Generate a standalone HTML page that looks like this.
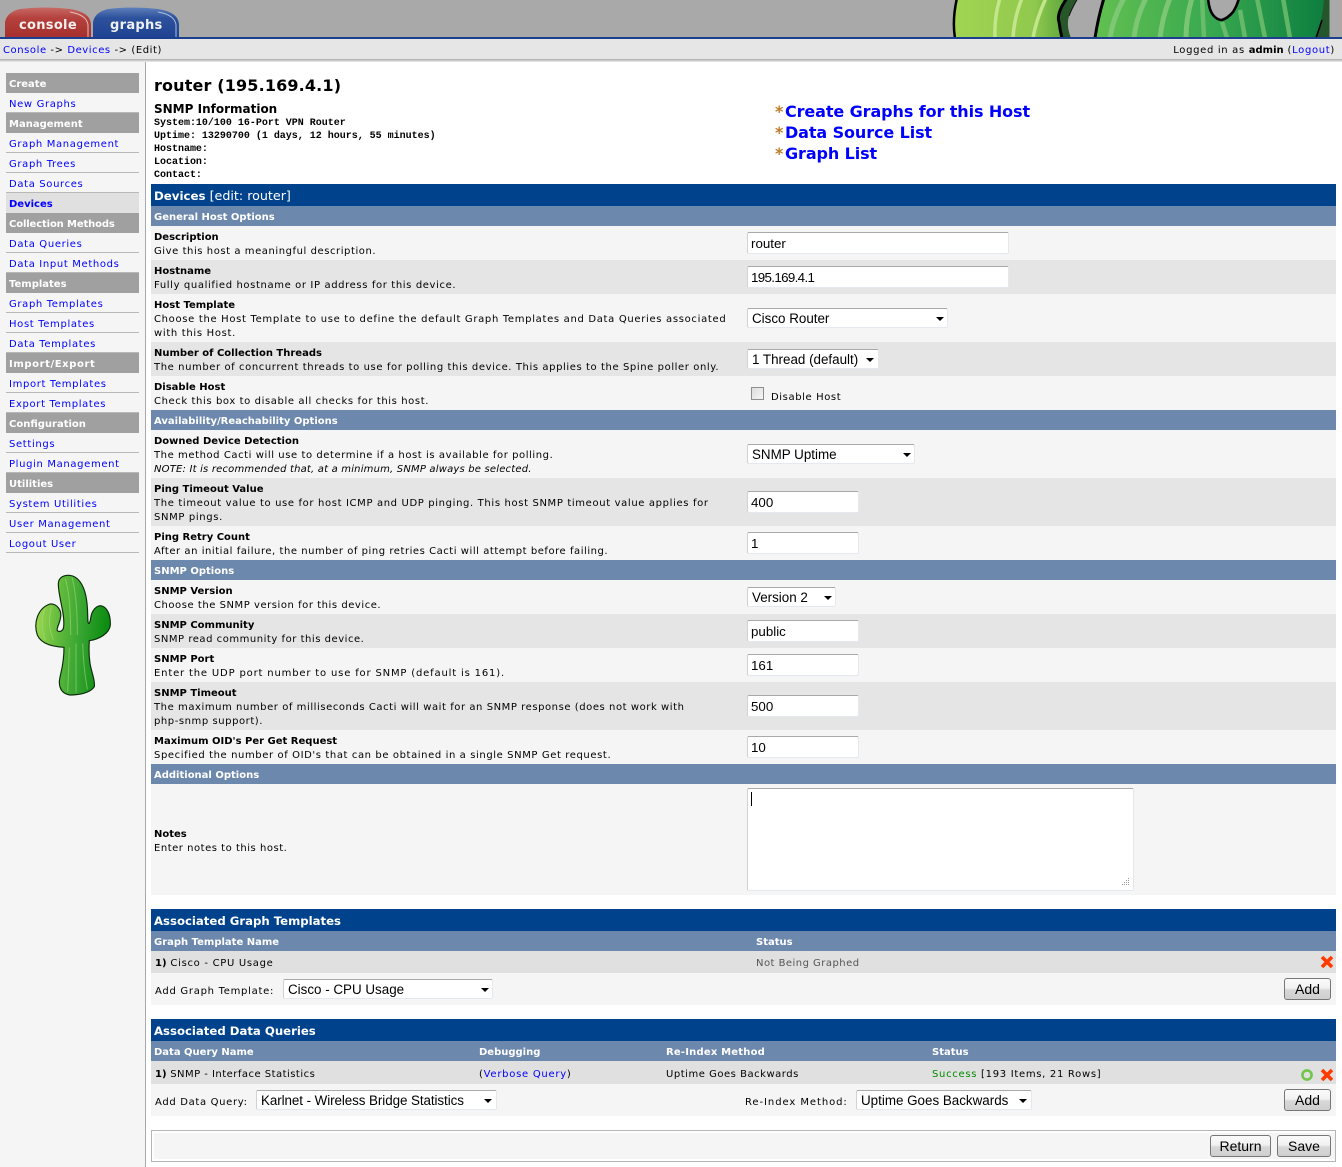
<!DOCTYPE html>
<html><head><meta charset="utf-8"><title>Console -> Devices -> (Edit)</title>
<style>
html,body{margin:0;padding:0;background:#fff;}
body{width:1342px;height:1167px;position:relative;overflow:hidden;font:10px/14px "DejaVu Sans",sans-serif;color:#000;letter-spacing:.6px;}
b{letter-spacing:0}
a{color:#00f;text-decoration:none;}
.a{position:absolute;white-space:nowrap;}
.r{position:absolute;left:151px;width:1185px;}
.f{background:#f5f5f5}.e{background:#e5e5e5}.d{background:#e0e0e0}
.s{background:#6d88ad;height:20px;color:#fff;font-weight:bold;line-height:24px;padding-left:3px;width:1182px;letter-spacing:0}
.b{background:#00438c;height:22px;color:#fff;line-height:24px;padding-left:3px;width:1182px;font-size:12.7px;letter-spacing:0}
.b b{font-size:11.8px}
.r div.t{position:absolute;left:3px;top:5px;width:620px;white-space:nowrap;}
.t b{display:block;height:14px;}
.h{position:absolute;left:6px;width:133px;height:20px;background:#a0a0a0;color:#fff;font-weight:bold;line-height:24px;letter-spacing:0}
.h span,.m span{margin-left:3px}
.m{position:absolute;left:6px;width:133px;height:19px;border-bottom:1px solid #b8b8b8;line-height:24px;letter-spacing:.65px}
input,select,textarea{position:absolute;box-sizing:border-box;background:#fff;border:1px solid #e4e9ef;border-top-color:#a9a9a9;border-left-color:#d0d3d6;border-radius:2px;margin:0;padding:0 3px;outline:0;font:13.33px "Liberation Sans",sans-serif;color:#000;letter-spacing:0;}
select{appearance:none;-webkit-appearance:none;padding:0 0 0 4px;letter-spacing:0;font-size:13.4px;}
.ar{position:absolute;width:0;height:0;border:4px solid transparent;border-top:4px solid #000;border-bottom:0;}
.btn{position:absolute;box-sizing:border-box;height:22px;border:1px solid #777;border-radius:3px;background:linear-gradient(#fbfbfb 0,#f1f1f1 45%,#d8d8d8 55%,#cfcfcf 100%);text-align:center;font:14px/20px "Liberation Sans",sans-serif;color:#000;letter-spacing:0}
.mono{font:bold 10px/13px "Liberation Mono",monospace;letter-spacing:-.01px}
.st{position:absolute;line-height:23px;color:#fff;font-weight:bold;letter-spacing:0;white-space:nowrap}
.lk i{display:inline-block;width:10px;font-style:normal}
</style></head><body>

<!-- top banner -->
<div class="a" style="left:0;top:0;width:1342px;height:37px;background:#a9a9a9;overflow:hidden">
<svg width="402" height="37" viewBox="940 0 402 37" style="position:absolute;left:940px;top:0">
<defs>
<linearGradient id="g1" x1="0" x2="1" y1="0" y2="0"><stop offset="0" stop-color="#a2d452"/><stop offset=".7" stop-color="#90c94e"/><stop offset="1" stop-color="#5aa53c"/></linearGradient>
<linearGradient id="g2" x1="0" x2="1" y1="0" y2="0"><stop offset="0" stop-color="#62c050"/><stop offset=".5" stop-color="#38a850"/><stop offset="1" stop-color="#0b7c3e"/></linearGradient>
</defs>
<path d="M957 -2Q952 20 955 38L1064 38Q1054 18 1068 -2Z" fill="url(#g1)"/>
<path d="M1000 -2Q994 18 995 38M1022 -2Q1014 18 1013 38M1046 -2Q1036 20 1033 38" stroke="#c3e58c" stroke-width="3.5" fill="none"/>
<path d="M957 -2Q952 20 955 38" stroke="#000" stroke-width="2.5" fill="none"/>
<path d="M1067 -2Q1056 14 1060 22Q1061 30 1063 38L1071 38Q1066 26 1069 16Q1072 8 1078 -2Z" fill="#26562a"/>
<path d="M1067 -2Q1056 14 1059 22Q1060 30 1062 38" stroke="#000" stroke-width="3" fill="none"/>
<path d="M1078 -2Q1072 8 1069 16" stroke="#111" stroke-width="1" fill="none"/>
<path d="M1104 -2Q1098 18 1095 38L1329.5 38L1329.5 -2Z" fill="url(#g2)"/>
<path d="M1124 -2Q1113 18 1110 38M1146 -2Q1136 18 1134 38M1170 -2Q1162 18 1160 38M1192 -2Q1186 18 1186 38" stroke="#85c97a" stroke-width="5" fill="none" opacity=".85"/>
<path d="M1202 -2L1204 38M1222 22L1227 38M1240 10L1245 38M1257 -2L1265 38M1283 -2L1290 38" stroke="#74c070" stroke-width="4.5" fill="none" opacity=".8"/>
<path d="M1324 -2Q1323 18 1316 38L1329.5 38L1329.5 -2Z" fill="#25562b"/>
<path d="M1322 20L1316 38" stroke="#000" stroke-width="1.6" fill="none"/>
<path d="M1104 -2Q1098 18 1095 38" stroke="#000" stroke-width="3" fill="none"/>
<path d="M1208 -2Q1209 10 1213 15Q1217 20 1222 20Q1228 18 1233 12Q1237 6 1239 -2Z" fill="#a9a9a9" stroke="#000" stroke-width="2.6"/>
</svg>
<svg width="190" height="37" style="position:absolute;left:0;top:0">
<defs>
<linearGradient id="rd" x1="0" x2="0" y1="0" y2="1"><stop offset="0" stop-color="#c86a66"/><stop offset=".35" stop-color="#b5423e"/><stop offset="1" stop-color="#a5302d"/></linearGradient>
<linearGradient id="bl" x1="0" x2="0" y1="0" y2="1"><stop offset="0" stop-color="#5f80bb"/><stop offset=".35" stop-color="#2d519c"/><stop offset="1" stop-color="#1f4392"/></linearGradient>
</defs>
<path d="M5 37V22Q7 12 20 9Q45 6 70 9Q90 12 91 24V37Z" fill="url(#rd)"/>
<path d="M88 37V25Q87 15 70 12" stroke="#e6bdbb" stroke-width="1" fill="none"/>
<path d="M93 37V22Q95 12 108 9Q133 6 158 9Q178 12 179 24V37Z" fill="url(#bl)"/>
<path d="M176 37V25Q175 15 158 12" stroke="#a9bbdb" stroke-width="1" fill="none"/>
</svg>
<div class="a" style="left:19px;top:17px;color:#f4f0ee;font:bold 13px/18px 'DejaVu Sans',sans-serif;letter-spacing:.3px">console</div>
<div class="a" style="left:110px;top:17px;color:#eef1f6;font:bold 13px/18px 'DejaVu Sans',sans-serif;letter-spacing:.3px">graphs</div>
</div>
<div class="a" style="left:0;top:37px;width:1342px;height:2px;background:#1b3f8e"></div>
<div class="a" style="left:0;top:39px;width:1342px;height:20px;background:#e6e6e6"></div>
<div class="a" style="left:0;top:59px;width:1342px;height:3px;background:linear-gradient(#a8a8a8,#efefef)"></div>
<div class="a" style="left:3px;top:44px;letter-spacing:.57px"><a>Console</a> -&gt; <a>Devices</a> -&gt; (Edit)</div>
<div class="a" style="right:7px;top:44px;letter-spacing:.68px">Logged in as <b>admin</b> (<a>Logout</a>)</div>

<!-- sidebar -->
<div class="a" style="left:0;top:62px;width:145px;height:1105px;background:#f5f5f5;border-right:1px solid #a9a9a9"></div>
<div class="h" style="top:73px"><span>Create</span></div>
<div class="m" style="top:93px"><span><a>New Graphs</a></span></div>
<div class="h" style="top:113px"><span>Management</span></div>
<div class="m" style="top:133px"><span><a>Graph Management</a></span></div>
<div class="m" style="top:153px"><span><a>Graph Trees</a></span></div>
<div class="m" style="top:173px"><span><a>Data Sources</a></span></div>
<div class="m" style="top:193px;background:#e0e0e0;border-bottom:0;height:20px"><span><a><b>Devices</b></a></span></div>
<div class="h" style="top:213px;letter-spacing:-.13px"><span>Collection Methods</span></div>
<div class="m" style="top:233px"><span><a>Data Queries</a></span></div>
<div class="m" style="top:253px"><span><a>Data Input Methods</a></span></div>
<div class="h" style="top:273px"><span>Templates</span></div>
<div class="m" style="top:293px"><span><a>Graph Templates</a></span></div>
<div class="m" style="top:313px"><span><a>Host Templates</a></span></div>
<div class="m" style="top:333px"><span><a>Data Templates</a></span></div>
<div class="h" style="top:353px;letter-spacing:.6px"><span>Import/Export</span></div>
<div class="m" style="top:373px"><span><a>Import Templates</a></span></div>
<div class="m" style="top:393px"><span><a>Export Templates</a></span></div>
<div class="h" style="top:413px"><span>Configuration</span></div>
<div class="m" style="top:433px"><span><a>Settings</a></span></div>
<div class="m" style="top:453px"><span><a>Plugin Management</a></span></div>
<div class="h" style="top:473px"><span>Utilities</span></div>
<div class="m" style="top:493px"><span><a>System Utilities</a></span></div>
<div class="m" style="top:513px"><span><a>User Management</a></span></div>
<div class="m" style="top:533px"><span><a>Logout User</a></span></div>

<svg class="a" style="left:0;top:560px" width="150" height="150" viewBox="0 0 450 450">
<defs><linearGradient id="cg" x1="0" x2="1" y1="0" y2=".15"><stop offset="0" stop-color="#a8dc55"/><stop offset=".35" stop-color="#62bb3c"/><stop offset=".65" stop-color="#38a532"/><stop offset="1" stop-color="#0c8c10"/></linearGradient></defs>
<path d="M175 72C175 50 195 45 208 46C235 48 250 75 257 105C265 140 262 170 264 185C265 195 270 190 272 175C275 150 290 137 302 137C322 140 332 165 331 195C328 222 295 238 268 242C266 270 267 290 270 310C275 340 286 360 283 380C270 400 235 405 210 405C190 402 178 390 178 365C180 340 192 320 192 262C165 260 125 255 112 225C100 190 112 145 150 132C170 130 185 150 182 170C180 190 168 205 172 212C180 218 190 212 191 200C195 160 175 110 175 72Z" fill="url(#cg)" stroke="#0b2c0b" stroke-width="3.5"/>
<path d="M196 56Q212 110 212 225M216 52Q232 110 232 225M208 262Q206 330 203 395M228 250V398M248 250Q250 320 262 388M135 145Q118 185 135 240M155 140Q140 190 160 240" stroke="#a8dd80" stroke-width="3" fill="none" opacity=".55"/>
</svg>

<!-- header -->
<div class="a" style="left:154px;top:76px;font:bold 16px/20px 'DejaVu Sans',sans-serif;letter-spacing:.15px">router (195.169.4.1)</div>
<div class="a" style="left:154px;top:101px;font:bold 12px/16px 'DejaVu Sans',sans-serif;letter-spacing:0">SNMP Information</div>
<div class="a mono" style="left:154px;top:117px">System:10/100 16-Port VPN Router</div>
<div class="a mono" style="left:154px;top:130px">Uptime: 13290700 (1 days, 12 hours, 55 minutes)</div>
<div class="a mono" style="left:154px;top:143px">Hostname:</div>
<div class="a mono" style="left:154px;top:156px">Location:</div>
<div class="a mono" style="left:154px;top:169px">Contact:</div>
<div class="a lk" style="left:775px;top:101px;font:bold 16px/21px 'DejaVu Sans',sans-serif;color:#c07c28;letter-spacing:-.1px"><i>*</i><a>Create Graphs for this Host</a><br><i>*</i><a>Data Source List</a><br><i>*</i><a>Graph List</a></div>

<!-- device form -->
<div class="r b" style="top:184px"><b>Devices</b> [edit: router]</div>
<div class="r s" style="top:206px">General Host Options</div>
<div class="r f" style="top:226px;height:34px"><div class="t" style="letter-spacing:.56px"><b>Description</b>Give this host a meaningful description.</div></div>
<div class="r e" style="top:260px;height:34px"><div class="t" style="letter-spacing:.62px"><b>Hostname</b>Fully qualified hostname or IP address for this device.</div></div>
<div class="r f" style="top:294px;height:48px"><div class="t" style="letter-spacing:.68px"><b>Host Template</b>Choose the Host Template to use to define the default Graph Templates and Data Queries associated<br>with this Host.</div></div>
<div class="r e" style="top:342px;height:34px"><div class="t" style="letter-spacing:.59px"><b>Number of Collection Threads</b>The number of concurrent threads to use for polling this device. This applies to the Spine poller only.</div></div>
<div class="r f" style="top:376px;height:34px"><div class="t"><b>Disable Host</b>Check this box to disable all checks for this host.</div></div>
<div class="r s" style="top:410px">Availability/Reachability Options</div>
<div class="r f" style="top:430px;height:48px"><div class="t" style="letter-spacing:.57px"><b>Downed Device Detection</b>The method Cacti will use to determine if a host is available for polling.<br><i style="letter-spacing:.19px">NOTE: It is recommended that, at a minimum, SNMP always be selected.</i></div></div>
<div class="r e" style="top:478px;height:48px"><div class="t" style="letter-spacing:.64px"><b>Ping Timeout Value</b>The timeout value to use for host ICMP and UDP pinging. This host SNMP timeout value applies for<br>SNMP pings.</div></div>
<div class="r f" style="top:526px;height:34px"><div class="t" style="letter-spacing:.54px"><b>Ping Retry Count</b>After an initial failure, the number of ping retries Cacti will attempt before failing.</div></div>
<div class="r s" style="top:560px">SNMP Options</div>
<div class="r f" style="top:580px;height:34px"><div class="t" style="letter-spacing:.54px"><b>SNMP Version</b>Choose the SNMP version for this device.</div></div>
<div class="r e" style="top:614px;height:34px"><div class="t" style="letter-spacing:.53px"><b>SNMP Community</b>SNMP read community for this device.</div></div>
<div class="r f" style="top:648px;height:34px"><div class="t" style="letter-spacing:.83px"><b>SNMP Port</b>Enter the UDP port number to use for SNMP (default is 161).</div></div>
<div class="r e" style="top:682px;height:48px"><div class="t" style="letter-spacing:.56px"><b>SNMP Timeout</b>The maximum number of milliseconds Cacti will wait for an SNMP response (does not work with<br>php-snmp support).</div></div>
<div class="r f" style="top:730px;height:34px"><div class="t"><b>Maximum OID's Per Get Request</b>Specified the number of OID's that can be obtained in a single SNMP Get request.</div></div>
<div class="r s" style="top:764px">Additional Options</div>
<div class="r f" style="top:784px;height:111px"><div class="t" style="top:44px;letter-spacing:.52px"><b>Notes</b>Enter notes to this host.</div></div>

<input style="left:747px;top:232px;width:262px;height:22px" value="router">
<input style="left:747px;top:266px;width:262px;height:22px;letter-spacing:-.65px" value="195.169.4.1">
<select style="left:747px;top:308px;width:201px;height:20px"><option>Cisco Router</option></select><i class="ar" style="left:936px;top:317px"></i>
<select style="left:747px;top:349px;width:132px;height:20px"><option>1 Thread (default)</option></select><i class="ar" style="left:866px;top:358px"></i>
<input type="checkbox" style="left:751px;top:387px;width:13px;height:13px;appearance:none;-webkit-appearance:none;padding:0;border:1px solid #8e8e8e;border-radius:0;background:linear-gradient(135deg,#ddd,#f6f6f6)">
<div class="a" style="left:771px;top:391px">Disable Host</div>
<select style="left:747px;top:444px;width:168px;height:20px"><option>SNMP Uptime</option></select><i class="ar" style="left:903px;top:453px"></i>
<input style="left:747px;top:491px;width:112px;height:22px" value="400">
<input style="left:747px;top:532px;width:112px;height:22px" value="1">
<select style="left:747px;top:587px;width:89px;height:20px"><option>Version 2</option></select><i class="ar" style="left:824px;top:596px"></i>
<input style="left:747px;top:620px;width:112px;height:22px" value="public">
<input style="left:747px;top:654px;width:112px;height:22px" value="161">
<input style="left:747px;top:695px;width:112px;height:22px" value="500">
<input style="left:747px;top:736px;width:112px;height:22px" value="10">
<textarea style="left:747px;top:788px;width:387px;height:103px;resize:none"></textarea>
<div class="a" style="left:751px;top:792px;width:1px;height:14px;background:#000"></div>
<svg class="a" style="left:1120px;top:877px" width="10" height="10"><path d="M8 1h1v1H8zM6 3h1v1H6zM8 3h1v1H8zM4 5h1v1H4zM6 5h1v1H6zM8 5h1v1H8zM2 7h1v1H2zM4 7h1v1H4zM6 7h1v1H6zM8 7h1v1H8z" fill="#999"/></svg>

<!-- graph templates -->
<div class="r b" style="top:909px;font-weight:bold;font-size:11.7px">Associated Graph Templates</div>
<div class="r s" style="top:931px">Graph Template Name</div>
<div class="st" style="left:756px;top:931px">Status</div>
<div class="r d" style="top:951px;height:22px"></div>
<div class="a" style="left:155px;top:957px;letter-spacing:.7px"><b>1)</b> Cisco - CPU Usage</div>
<div class="a" style="left:756px;top:957px;color:#555;letter-spacing:.47px">Not Being Graphed</div>
<svg class="a" style="left:1320px;top:955px" width="14" height="14"><path d="M2 2L12 12M12 2L2 12" stroke="#ff3a00" stroke-width="3.6"/></svg>
<div class="r f" style="top:973px;height:32px"></div>
<div class="a" style="left:155px;top:985px;letter-spacing:.72px">Add Graph Template:</div>
<select style="left:283px;top:979px;width:210px;height:20px"><option>Cisco - CPU Usage</option></select><i class="ar" style="left:481px;top:988px"></i>
<div class="btn" style="left:1284px;top:978px;width:47px">Add</div>

<!-- data queries -->
<div class="r b" style="top:1019px;font-weight:bold;font-size:11.7px">Associated Data Queries</div>
<div class="r s" style="top:1041px">Data Query Name</div>
<div class="st" style="left:479px;top:1041px">Debugging</div>
<div class="st" style="left:666px;top:1041px;letter-spacing:.2px">Re-Index Method</div>
<div class="st" style="left:932px;top:1041px">Status</div>
<div class="r d" style="top:1061px;height:23px"></div>
<div class="a" style="left:155px;top:1068px;letter-spacing:.48px"><b>1)</b> SNMP - Interface Statistics</div>
<div class="a" style="left:479px;top:1068px;letter-spacing:.73px">(<a>Verbose Query</a>)</div>
<div class="a" style="left:666px;top:1068px;letter-spacing:.52px">Uptime Goes Backwards</div>
<div class="a" style="left:932px;top:1068px;letter-spacing:.7px"><span style="color:#008a00">Success</span> [193 Items, 21 Rows]</div>
<svg class="a" style="left:1300px;top:1068px" width="14" height="14"><circle cx="7" cy="7" r="4.6" fill="none" stroke="#72c548" stroke-width="2.6"/></svg>
<svg class="a" style="left:1320px;top:1068px" width="14" height="14"><path d="M2 2L12 12M12 2L2 12" stroke="#ff3a00" stroke-width="3.6"/></svg>
<div class="r f" style="top:1084px;height:32px"></div>
<div class="a" style="left:155px;top:1096px;letter-spacing:.67px">Add Data Query:</div>
<select style="left:256px;top:1090px;width:241px;height:20px;letter-spacing:-.07px"><option>Karlnet - Wireless Bridge Statistics</option></select><i class="ar" style="left:484px;top:1099px"></i>
<div class="a" style="left:745px;top:1096px;letter-spacing:.93px">Re-Index Method:</div>
<select style="left:856px;top:1090px;width:176px;height:20px"><option>Uptime Goes Backwards</option></select><i class="ar" style="left:1019px;top:1099px"></i>
<div class="btn" style="left:1284px;top:1089px;width:47px">Add</div>

<!-- footer -->
<div class="a" style="left:151px;top:1130px;width:1183px;height:30px;border:1px solid #b5b5b5;background:#fff"><div style="position:absolute;left:2px;top:2px;right:0;bottom:2px;background:#f5f5f5"></div></div>
<div class="btn" style="left:1210px;top:1135px;width:61px">Return</div>
<div class="btn" style="left:1277px;top:1135px;width:54px">Save</div>
</body></html>
